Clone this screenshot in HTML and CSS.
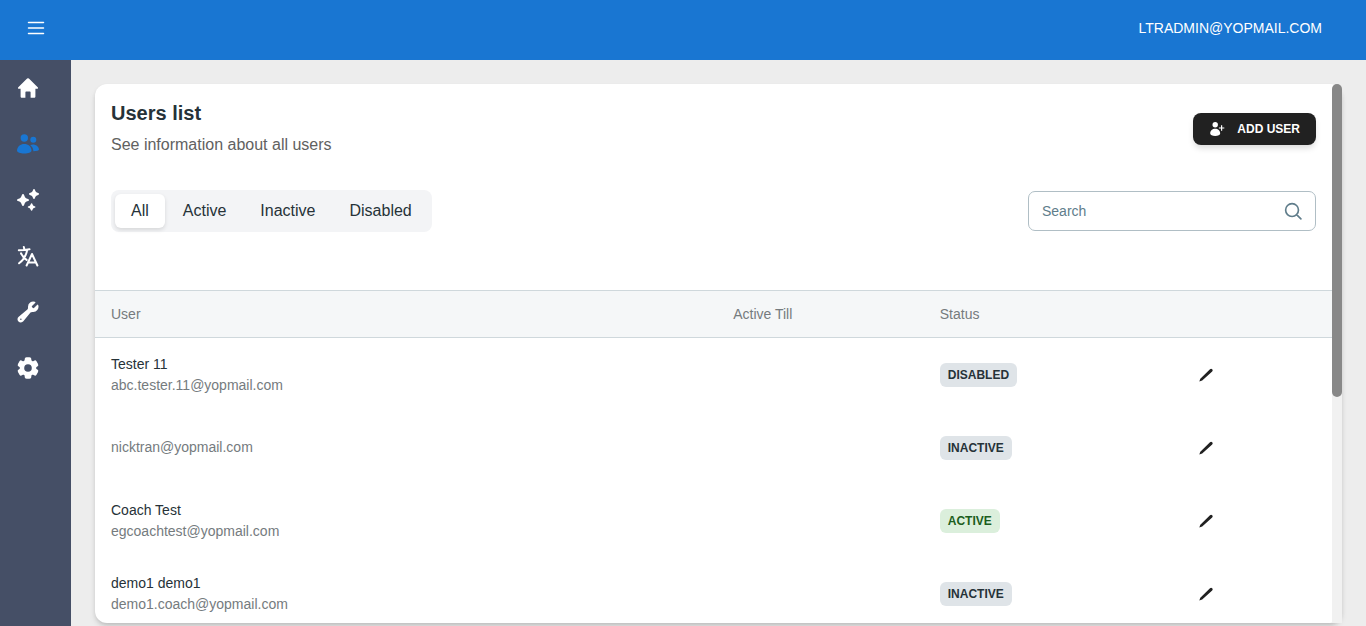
FILE: index.html
```html
<!DOCTYPE html>
<html lang="en">
<head>
    <meta charset="UTF-8">
    <meta name="viewport" content="width=device-width, initial-scale=1.0">
    <title>Users list</title>

    <link rel="stylesheet" href="styles.css">
</head>
<body>
    <header class="topbar">
        <button class="menuBtn" type="button" aria-label="Menu">
            <svg class="icon stroke" viewBox="0 0 24 24"><path d="M4.500 6.500h15M4.500 12h15M4.500 17.500h15"/></svg>
        </button>
        <button class="account" type="button">LTRADMIN@YOPMAIL.COM</button>
    </header>
    <div class="layout">
        <nav class="sidebar">
            <a href="#" aria-label="Home">
                <svg class="icon" viewBox="0 0 24 24"><path d="M11.1 2.6a1.3 1.3 0 0 1 1.8 0l8.8 8.6c.7.7.3 1.6-.6 1.6h-1.7v7.6c0 .8-.5 1.3-1.3 1.3h-3.5v-5.3c0-.6-.4-1-1-1h-3.2c-.6 0-1 .4-1 1v5.3H5.9c-.8 0-1.3-.5-1.3-1.3v-7.6H2.900c-.9 0-1.3-.9-.6-1.6z"/></svg>
            </a>
            <a href="#" class="active" aria-label="Users">
                <svg class="icon" viewBox="0 0 24 24"><circle cx="8.3" cy="6" r="3.7"/><circle cx="17.3" cy="7.7" r="3"/><path d="M1 18.5C1 14.5 4.500 11.900 8.300 11.900s7.200 2.600 7.200 6.600c0 2-3.200 3-7.200 3s-7.300-1-7.300-3z"/><path d="M14.3 13.2c3.8-1.8 8.6.8 8.7 4.300 0 1.200-2.300 1.700-5.600 1.700-.1-2.500-1.100-4.600-3.100-6z"/></svg>
            </a>
            <a href="#" aria-label="Highlights">
                <svg class="icon" viewBox="0 0 24 24"><path d="M7 6c.6 0 .9.3 1.100.9.7 2.400 1.600 3.300 4 4 .6.2.9.5.9 1.100s-.3.9-.9 1.100c-2.400.7-3.300 1.600-4 4-.2.6-.5.9-1.100.9s-.9-.3-1.100-.9c-.7-2.400-1.600-3.300-4-4C1.300 12.900 1 12.600 1 12s.3-.9.9-1.100c2.400-.7 3.300-1.600 4-4C6.100 6.300 6.400 6 7 6z"/><path d="M18 1c.5 0 .8.3.9.8.5 1.900 1.400 2.800 3.300 3.300.5.1.8.4.8.9s-.3.8-.8.9c-1.900.5-2.800 1.400-3.300 3.300-.1.5-.4.8-.9.8s-.8-.3-.9-.8c-.5-1.900-1.400-2.800-3.300-3.300-.5-.1-.8-.4-.8-.9s.3-.8.8-.9c1.900-.5 2.800-1.400 3.300-3.300.1-.5.4-.8.9-.8z"/><path d="M15.600 15.200c.5 0 .7.2.8.7.4 1.300 1 1.900 2.300 2.300.5.1.7.3.7.8s-.2.7-.7.8c-1.300.4-1.900 1-2.300 2.300-.1.5-.3.7-.8.7s-.7-.2-.8-.7c-.4-1.300-1-1.900-2.300-2.300-.5-.1-.7-.3-.7-.8s.2-.7.7-.8c1.300-.4 1.900-1 2.300-2.300.1-.5.3-.7.8-.7z"/></svg>
            </a>
            <a href="#" aria-label="Languages">
                <svg class="icon bold" viewBox="0 0 24 24"><path d="M2.8 6.2c4 0 7.500-.3 10.700-.9M7.800 2.900l.6 2.800M11.200 5.800C10.200 11.500 7.500 16 3.100 19.300M5 9.300c1.300 2.700 3.200 5 5.600 6.600M10.600 21.500l5.400-11.500 5.400 11.500M12.100 18.500h7.800"/></svg>
            </a>
            <a href="#" aria-label="Tools">
                <svg class="icon" viewBox="0 0 24 24"><path fill-rule="evenodd" d="M12 6.75a5.25 5.25 0 0 1 6.775-5.025.75.75 0 0 1 .313 1.248l-3.32 3.319c.063.475.276.934.641 1.299.365.365.824.578 1.3.64l3.318-3.319a.75.75 0 0 1 1.248.313 5.25 5.25 0 0 1-5.472 6.756c-1.018-.086-1.87.1-2.309.634L7.344 21.3A3.298 3.298 0 1 1 2.7 16.657l8.684-7.151c.533-.44.72-1.291.634-2.309A5.342 5.342 0 0 1 12 6.75ZM4.117 19.125a.75.75 0 0 1 .75-.75h.008a.75.75 0 0 1 .75.75v.008a.75.75 0 0 1-.75.75h-.008a.75.75 0 0 1-.75-.75v-.008Z"/></svg>
            </a>
            <a href="#" aria-label="Settings">
                <svg class="icon" viewBox="0 0 24 24"><circle cx="12" cy="12" r="8.3"/><rect id="tooth" x="8.7" y="1.3" width="6.6" height="21.4" rx="1.8"/><use href="#tooth" transform="rotate(60 12 12)"/><use href="#tooth" transform="rotate(120 12 12)"/><circle class="hole" cx="12" cy="12" r="3.8"/></svg>
            </a>
        </nav>
        <main class="content">
            <section class="card">
                <div class="cardBody">
                    <div class="cardTop">
                        <div class="heading">
                            <div>
                                <h1>Users list</h1>
                                <p>See information about all users</p>
                            </div>
                            <button class="addUser" type="button">
                                <svg viewBox="0 0 16 16"><circle cx="6.2" cy="3.8" r="2.700"/><path d="M1.2 12.600c0-3 2.200-4.900 5-4.900s5 1.900 5 4.900c0 1.600-2.200 2.300-5 2.300s-5-.7-5-2.300z"/><path d="M12 4.300h1.200v2.100h2.100v1.200h-2.100v2.100H12V7.600H9.900V6.400H12z"/></svg>
                                ADD USER
                            </button>
                        </div>
                        <div class="filters">
                            <div class="tabs">
                                <button class="tab active" type="button">All</button>
                                <button class="tab" type="button">Active</button>
                                <button class="tab" type="button">Inactive</button>
                                <button class="tab" type="button">Disabled</button>
                            </div>
                            <label class="search">
                                <input type="text" placeholder="Search" aria-label="Search">
                                <svg class="bold" viewBox="0 0 24 24"><path d="m21.500 21.500-5.200-5.200m0 0A7.700 7.700 0 1 0 5.400 5.400a7.700 7.700 0 0 0 10.900 10.900Z"/></svg>
                            </label>
                        </div>
                    </div>
                    <table class="users">
                        <thead>
                            <tr>
                                <th class="colUser">User</th>
                                <th class="colTill">Active Till</th>
                                <th class="colStatus">Status</th>
                                <th></th>
                            </tr>
                        </thead>
                        <tbody>
                            <tr>
                                <td><div class="name">Tester 11</div><div class="email">abc.tester.11@yopmail.com</div></td>
                                <td></td>
                                <td><span class="badge">DISABLED</span></td>
                                <td><button class="edit" type="button" aria-label="Edit"><svg viewBox="0 0 16 16"><path d="M1.300 14.600l1-2.800L12 2.200a1.500 1.500 0 0 1 2.200 2.200L4.200 13.600z"/></svg></button></td>
                            </tr>
                            <tr>
                                <td><div class="email">nicktran@yopmail.com</div></td>
                                <td></td>
                                <td><span class="badge">INACTIVE</span></td>
                                <td><button class="edit" type="button" aria-label="Edit"><svg viewBox="0 0 16 16"><path d="M1.300 14.600l1-2.800L12 2.200a1.500 1.500 0 0 1 2.200 2.200L4.200 13.600z"/></svg></button></td>
                            </tr>
                            <tr>
                                <td><div class="name">Coach Test</div><div class="email">egcoachtest@yopmail.com</div></td>
                                <td></td>
                                <td><span class="badge green">ACTIVE</span></td>
                                <td><button class="edit" type="button" aria-label="Edit"><svg viewBox="0 0 16 16"><path d="M1.300 14.600l1-2.800L12 2.200a1.500 1.500 0 0 1 2.200 2.200L4.200 13.600z"/></svg></button></td>
                            </tr>
                            <tr>
                                <td><div class="name">demo1 demo1</div><div class="email">demo1.coach@yopmail.com</div></td>
                                <td></td>
                                <td><span class="badge">INACTIVE</span></td>
                                <td><button class="edit" type="button" aria-label="Edit"><svg viewBox="0 0 16 16"><path d="M1.300 14.600l1-2.800L12 2.200a1.500 1.500 0 0 1 2.200 2.200L4.200 13.600z"/></svg></button></td>
                            </tr>
                        </tbody>
                    </table>
                </div>
                <div class="scrollbar"><div class="thumb"></div></div>
            </section>
        </main>
    </div>
</body>
</html>
```
FILE: styles.css
```css
*{
    margin: 0;
    padding: 0;
    box-sizing: border-box;
}
body{
    height: 100vh;
    display: flex;
    flex-direction: column;
    overflow: hidden;
    background-color: #ededed;
    color: #263238;
    font-family: "Liberation Sans", Arial, sans-serif;
    font-size: 14px;
    line-height: 21px;
}
button,input{
    font: inherit;
    color: inherit;
    border: none;
    background: none;
}
button{
    cursor: pointer;
}
svg{
    display: block;
    fill: currentColor;
}
.icon{
    width: 24px;
    height: 24px;
}
.stroke,.bold{
    fill: none;
    stroke: currentColor;
    stroke-width: 1.5;
    stroke-linecap: round;
    stroke-linejoin: round;
}
.bold{
    stroke-width: 2;
}
.topbar{
    flex: none;
    height: 60px;
    padding: 0 44px 4px 24px;
    display: flex;
    justify-content: space-between;
    align-items: center;
    background-color: #1976d2;
    color: #fff;
}
.layout{
    flex: 1;
    min-height: 0;
    display: flex;
}
.sidebar{
    flex: none;
    width: 71px;
    padding: 16px;
    display: flex;
    flex-direction: column;
    gap: 32px;
    background-color: #454f66;
}
.sidebar a{
    color: #fff;
}
.sidebar a.active{
    color: #1976d2;
}
.hole{
    fill: #454f66;
}
.content{
    flex: 1;
    min-width: 0;
    display: flex;
    padding: 24px 24px 3px;
}
.card{
    flex: 1;
    min-width: 0;
    display: flex;
    background-color: #fff;
    border-radius: 12px;
    box-shadow: 0 4px 6px -1px rgba(0,0,0,0.15), 0 2px 4px -1px rgba(0,0,0,0.1);
}
.cardBody{
    flex: 1;
    min-width: 0;
    overflow-y: auto;
    scrollbar-width: none;
    border-radius: 12px 0 0 12px;
}
.scrollbar{
    flex: none;
    width: 10px;
    background-color: #f1f1f1;
    border-radius: 5px 5px 0 0;
}
.thumb{
    height: 58%;
    background-color: #888;
    border-radius: 5px;
}
.cardTop{
    padding: 16px 16px 58px;
}
.heading,.filters{
    display: flex;
    justify-content: space-between;
    align-items: center;
}
.heading{
    margin-bottom: 32px;
}
.heading h1{
    font-size: 20px;
    line-height: 27px;
    margin-bottom: 4px;
}
.heading p{
    font-size: 16px;
    line-height: 27px;
    color: #616161;
}
.addUser{
    height: 32px;
    padding: 0 16px;
    display: flex;
    align-items: center;
    gap: 12px;
    background-color: #212121;
    color: #fff;
    border-radius: 8px;
    font-size: 12px;
    font-weight: bold;
    box-shadow: 0 4px 6px -1px rgba(0,0,0,0.15);
}
.addUser svg{
    width: 16px;
    height: 16px;
}
.tabs{
    display: flex;
    gap: 2px;
    padding: 4px;
    background-color: #f3f4f6;
    border-radius: 8px;
}
.tab{
    height: 34px;
    padding: 0 16px 2px;
    border-radius: 6px;
    font-size: 16px;
}
.tab.active{
    background-color: #fff;
    box-shadow: 0 2px 4px rgba(0,0,0,0.12);
}
.search{
    width: 288px;
    height: 40px;
    padding: 0 12px 0 13px;
    display: flex;
    align-items: center;
    border: 1px solid #b0bec5;
    border-radius: 7px;
    color: #607d8b;
}
.search input{
    flex: 1;
    min-width: 0;
    outline: none;
}
.search input::placeholder{
    color: #607d8b;
}
.search svg{
    width: 20px;
    height: 20px;
}
.users{
    width: 100%;
    table-layout: fixed;
    border-spacing: 0;
    text-align: left;
}
.colUser{
    width: 50.3%;
}
.colTill{
    width: 16.7%;
}
.colStatus{
    width: 19.9%;
}
.users th{
    height: 48px;
    padding: 0 16px;
    background-color: #f5f7f8;
    border-top: 1px solid #cfd8dc;
    border-bottom: 1px solid #cfd8dc;
    color: #757b7e;
    font-weight: normal;
}
.users td{
    height: 73px;
    padding: 0 16px;
}
.email{
    color: #757b7e;
}
.badge{
    display: inline-block;
    padding: 0 8px;
    border-radius: 6px;
    background-color: #dfe4e8;
    font-size: 12px;
    font-weight: bold;
    line-height: 24px;
    vertical-align: middle;
}
.badge.green{
    background-color: #dbefdc;
    color: #1b5e20;
}
.edit{
    width: 40px;
    height: 40px;
    padding: 12px;
    color: #212121;
}
.edit svg{
    width: 16px;
    height: 16px;
}
```
